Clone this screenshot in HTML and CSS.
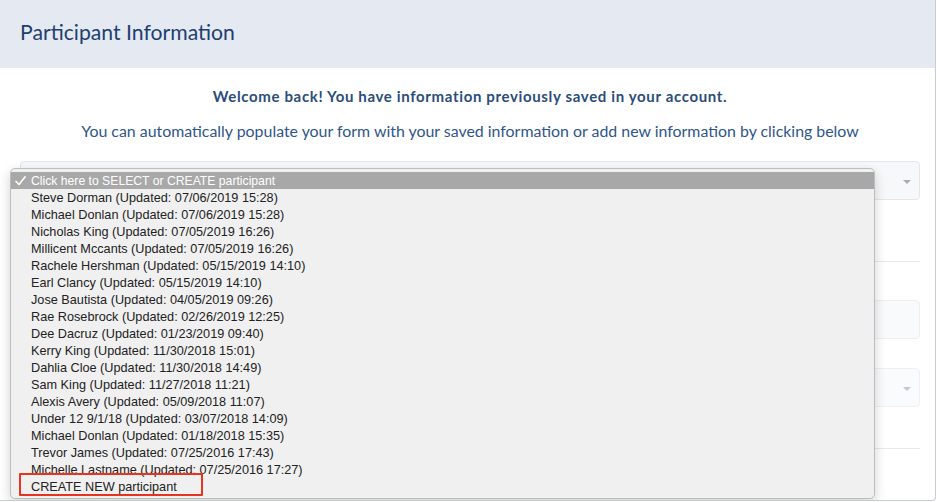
FILE: index.html
```html
<!DOCTYPE html>
<html>
<head>
<meta charset="utf-8">
<link rel="stylesheet" href="styles.css">
</head>
<body>
<div class="card">
  <div class="card-header"><h1 class="title">Participant Information</h1></div>
  <div class="card-body">
    <p class="welcome">Welcome back! You have information previously saved in your account.</p>
    <p class="sub">You can automatically populate your form with your saved information or add new information by clicking below</p>
    <div class="field select first"><span class="caret"></span></div>
    <div class="gap1"></div>
    <hr class="rule">
    <div class="field input mt1"></div>
    <div class="field select mt2"><span class="caret light"></span></div>
    <hr class="rule mt3">
  </div>
  <div class="popup">
    <div class="opt selected"><svg class="check" width="11" height="10" viewBox="0 0 11 10"><polyline points="1,5.5 4,8.5 10,1" fill="none" stroke="#fff" stroke-width="1.7" stroke-linecap="round" stroke-linejoin="round"/></svg>Click here to SELECT or CREATE participant</div>
    <div class="opt">Steve Dorman (Updated: 07/06/2019 15:28)</div>
    <div class="opt">Michael Donlan (Updated: 07/06/2019 15:28)</div>
    <div class="opt">Nicholas King (Updated: 07/05/2019 16:26)</div>
    <div class="opt">Millicent Mccants (Updated: 07/05/2019 16:26)</div>
    <div class="opt">Rachele Hershman (Updated: 05/15/2019 14:10)</div>
    <div class="opt">Earl Clancy (Updated: 05/15/2019 14:10)</div>
    <div class="opt">Jose Bautista (Updated: 04/05/2019 09:26)</div>
    <div class="opt">Rae Rosebrock (Updated: 02/26/2019 12:25)</div>
    <div class="opt">Dee Dacruz (Updated: 01/23/2019 09:40)</div>
    <div class="opt">Kerry King (Updated: 11/30/2018 15:01)</div>
    <div class="opt">Dahlia Cloe (Updated: 11/30/2018 14:49)</div>
    <div class="opt">Sam King (Updated: 11/27/2018 11:21)</div>
    <div class="opt">Alexis Avery (Updated: 05/09/2018 11:07)</div>
    <div class="opt">Under 12 9/1/18 (Updated: 03/07/2018 14:09)</div>
    <div class="opt">Michael Donlan (Updated: 01/18/2018 15:35)</div>
    <div class="opt">Trevor James (Updated: 07/25/2016 17:43)</div>
    <div class="opt">Michelle Lastname (Updated: 07/25/2016 17:27)</div>
    <div class="opt create">CREATE NEW participant</div>
  </div>
  <div class="highlight-box"></div>
</div>
</body>
</html>
```
FILE: styles.css
```css
* { box-sizing: border-box; }
html, body { margin: 0; padding: 0; background: #fff; }
body { width: 937px; height: 502px; overflow: hidden; font-family: Lato, "Open Sans", sans-serif; }

.card {
  position: relative;
  width: 936px;
  height: 501px;
  border-right: 1px solid #c9ccd1;
  border-bottom: 1px solid #c9ccd1;
  border-bottom-right-radius: 4px;
  overflow: hidden;
}
.card-header {
  height: 68px;
  background: #e4e9f2;
  padding: 19px 0 0 20px;
}
.title {
  margin: 0;
  font-weight: 400;
  font-size: 21.2px;
  line-height: 26px;
  color: #213f6e;
}
.card-body { padding: 0 15px 0 20px; }
.welcome {
  margin: 19px 0 0;
  text-align: center;
  font-weight: 700;
  font-size: 15px;
  letter-spacing: 0.65px;
  line-height: 18px;
  color: #2b4d7a;
}
.sub {
  margin: 17px 0 0;
  text-align: center;
  font-size: 15.9px;
  line-height: 18px;
  color: #2f5689;
}
.field {
  position: relative;
  height: 39px;
  border: 1px solid #e3e7ed;
  border-radius: 4px;
  background: #f7f8fa;
}
.field.first { margin-top: 21px; }
.caret {
  position: absolute;
  right: 8px;
  top: 18px;
  width: 0; height: 0;
  border-left: 4px solid transparent;
  border-right: 4px solid transparent;
  border-top: 4px solid #a9adb3;
}
.caret.light { border-top-color: #c4c7cc; }
.gap1 { height: 61px; }
.rule { margin: 0; border: 0; border-top: 1px solid #e6e8eb; }
.mt1 { margin-top: 38px; background: #f9fafb; border-color: #eceef1; }
.mt2 { margin-top: 29px; background: #fafbfc; border-color: #eef0f3; }
.mt3 { margin-top: 41px; }

.popup {
  position: absolute;
  left: 10px;
  top: 168px;
  width: 865px;
  height: 331px;
  background: #f0f0f0;
  border: 1px solid #bdbdbd;
  border-radius: 5px;
  padding-top: 3px;
  box-shadow: 0 4px 12px rgba(0,0,0,0.18);
  font-family: "Liberation Sans", Arial, sans-serif;
  font-size: 12.7px;
  color: #222;
}
.opt {
  position: relative;
  height: 17px;
  line-height: 18px;
  padding-left: 20px;
  white-space: nowrap;
}
.opt.selected { background: #a8a8a8; color: #fff; font-size: 12.2px; }
.check {
  position: absolute;
  left: 4px;
  top: 4px;
}
.highlight-box {
  position: absolute;
  left: 19px;
  top: 473px;
  width: 184px;
  height: 23px;
  border: 2px solid #e8341f;
  border-radius: 1px;
}
```
